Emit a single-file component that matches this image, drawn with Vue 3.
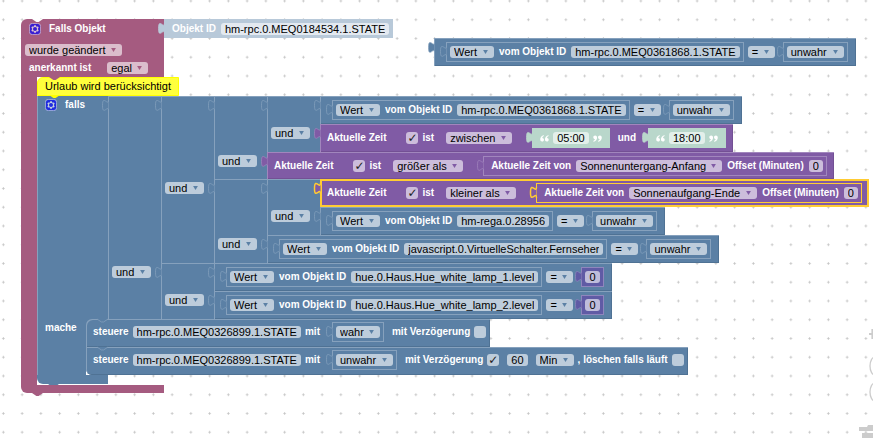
<script setup>
defineOptions({ name: 'BlockNode' })
defineProps({ node: { type: Object, default: null } })

const label = (text, gap) => ({ type: 'label', text, gap })
const field = (text, name, gap) => ({ type: 'field', text, name, gap })
const select = (text, name, gap) => ({ type: 'select', text, name, gap })
const check = (on, name, gap) => ({ type: 'check', on, name, gap })
const sub = (node, gap) => ({ type: 'block', node, gap })
const quote = (side) => ({ type: 'quote', side })

const inner = (color, items, extra = '') => ({ kind: 'row', cls: ['inner', color, extra], items })
const row = (color, items, extra = '') => ({ kind: 'row', cls: ['leaf', color, extra], items })
const and = (a, b) => ({ kind: 'and', a, b })

const bool = (text) => inner('blue', [select(text, 'Wahrheitswert')])
const num = (text) => inner('indigo', [field(text, 'Zahl')])
const clock = (text) => inner('green', [quote('open'), field(text, 'Uhrzeit'), quote('close')])
const compare = (id, right) =>
  row('blue', [
    sub(inner('blue', [select('Wert', 'Attribut'), label('vom Objekt ID'), field(id, 'Objekt ID')])),
    select('=', 'Vergleich'),
    sub(right, 'sm'),
  ], 'holds')
const time = (op, rest, extra) =>
  row('purple', [
    label('Aktuelle Zeit'),
    check(true, 'Aktuelle Zeit', 'lg'),
    label('ist'),
    select(op, 'Zeitvergleich', 'md'),
    ...rest,
  ], extra)
const astro = (name) =>
  sub(inner('purple', [
    label('Aktuelle Zeit von'),
    select(name, 'Astrozeit'),
    label('Offset (Minuten)'),
    field('0', 'Offset in Minuten'),
  ], 'wide'), 'lg')
const steer = (value, rest) => ({
  kind: 'row',
  cls: ['leaf', 'blue', 'statement'],
  items: [
    label('steuere'),
    field('hm-rpc.0.MEQ0326899.1.STATE', 'Objekt ID'),
    label('mit'),
    sub(bool(value), 'md'),
    label('mit Verzögerung', 'sm'),
    ...rest,
  ],
})

const trigger = inner('pale', [label('Objekt ID'), field('hm-rpc.0.MEQ0184534.1.STATE', 'Objekt ID')], 'wide')
const loose = compare('hm-rpc.0.MEQ0361868.1.STATE', bool('unwahr'))

const condition = and(
  and(
    and(
      and(
        compare('hm-rpc.0.MEQ0361868.1.STATE', bool('unwahr')),
        time('zwischen', [sub(clock('05:00'), 'lg'), label('und', 'sm'), sub(clock('18:00'), 'md')]),
      ),
      time('größer als', [astro('Sonnenuntergang-Anfang')], 'short'),
    ),
    and(
      and(
        time('kleiner als', [astro('Sonnenaufgang-Ende')], 'selected'),
        compare('hm-rega.0.28956', bool('unwahr')),
      ),
      compare('javascript.0.VirtuelleSchalter.Fernseher', bool('unwahr')),
    ),
  ),
  and(
    compare('hue.0.Haus.Hue_white_lamp_1.level', num('0')),
    compare('hue.0.Haus.Hue_white_lamp_2.level', num('0')),
  ),
)

const actions = [
  steer('wahr', [check(false, 'mit Verzögerung')]),
  steer('unwahr', [
    check(true, 'mit Verzögerung'),
    field('60', 'Verzögerung', 'sm'),
    select('Min', 'Einheit', 'sm'),
    label(', löschen falls läuft'),
    check(false, 'löschen falls läuft'),
  ]),
]

const gear =
  'm4.203,7.296 0,1.368 -0.92,0.677 -0.11,0.41 0.9,1.559 0.41,0.11 1.043,-0.457 1.187,0.683 0.127,1.134 0.3,0.3 1.8,0 0.3,-0.299 0.127,-1.138 1.185,-0.682 1.046,0.458 0.409,-0.11 0.9,-1.559 -0.11,-0.41 -0.92,-0.677 0,-1.366 0.92,-0.677 0.11,-0.41 -0.9,-1.559 -0.409,-0.109 -1.046,0.458 -1.185,-0.682 -0.127,-1.138 -0.3,-0.299 -1.8,0 -0.3,0.3 -0.126,1.135 -1.187,0.682 -1.043,-0.457 -0.41,0.11 -0.899,1.559 0.108,0.409z'
const tab = 'M8,5 c0,10 -8,-8 -8,7.5 s8,-2.5 8,7.5'
</script>

<template>
  <main v-if="!node" class="workspace">
    <svg class="grid-dots" aria-hidden="true">
      <defs>
        <pattern id="dots" width="25" height="25" patternUnits="userSpaceOnUse" patternTransform="translate(-6 -8.4) scale(.75)">
          <path d="M11 12.5h3M12.5 11v3" stroke="#c4c4c4" stroke-width="1.4" />
        </pattern>
      </defs>
      <rect width="100%" height="100%" fill="url(#dots)" />
    </svg>

    <section class="script">
      <div class="event-head pink">
        <svg class="notch" viewBox="0 0 15 4"><path fill="#fff" d="M0 0l6 4h3l6-4z" /></svg>
        <div class="event-title">
          <button class="gear" type="button" aria-label="Einstellungen">
            <svg viewBox="0 0 16 16"><rect class="gear-box" x=".5" y=".5" width="15" height="15" rx="4" /><path fill="#fff" :d="gear" /><circle class="gear-hub" cx="8" cy="8" r="2.7" /></svg>
          </button>
          <span class="label">Falls Objekt</span>
          <BlockNode class="trigger" :node="trigger" />
        </div>
        <div class="event-line">
          <span class="pick">
            <select aria-label="Ereignis"><option>wurde geändert</option></select>
            <svg class="arrow" viewBox="0 0 6 5"><path d="M0 0h6L3 5z" /></svg>
          </span>
        </div>
        <div class="event-line">
          <label class="label" for="ack">anerkannt ist</label>
          <span class="pick gap-lg">
            <select id="ack"><option>egal</option></select>
            <svg class="arrow" viewBox="0 0 6 5"><path d="M0 0h6L3 5z" /></svg>
          </span>
        </div>
      </div>

      <div class="event-body">
        <div class="rail pink"></div>
        <div class="stack">
          <div class="comment">
            <svg class="notch pink-notch" viewBox="0 0 15 4"><path d="M0 0l6 4h3l6-4z" /></svg>
            Urlaub wird berücksichtigt
            <svg class="notch yellow-notch" viewBox="0 0 15 4"><path d="M0 0l6 4h3l6-4z" /></svg>
          </div>
          <div class="branch">
            <div class="arm arm-if blue">
              <button class="gear" type="button" aria-label="Bedingung bearbeiten">
                <svg viewBox="0 0 16 16"><rect class="gear-box" x=".5" y=".5" width="15" height="15" rx="4" /><path fill="#fff" :d="gear" /><circle class="gear-hub" cx="8" cy="8" r="2.7" /></svg>
              </button>
              <span class="label">falls</span>
            </div>
            <BlockNode :node="condition" />
          </div>
          <div class="branch">
            <div class="arm arm-do blue"><span class="label">mache</span></div>
            <div class="actions">
              <BlockNode v-for="(a, i) in actions" :key="i" :node="a" />
            </div>
          </div>
          <div class="foot blue">
            <svg class="notch under" viewBox="0 0 15 4"><path d="M0 0l6 4h3l6-4z" /></svg>
          </div>
        </div>
      </div>
      <div class="event-foot pink">
        <svg class="notch under" viewBox="0 0 15 4"><path d="M0 0l6 4h3l6-4z" /></svg>
      </div>
    </section>

    <section class="loose"><BlockNode :node="loose" /></section>

    <svg class="controls" viewBox="0 0 14 112" aria-hidden="true">
      <g fill="none" stroke="#ccc" stroke-width="1.3">
        <path d="M10 8h4M13.4 3v10" stroke-width="2" />
        <ellipse cx="16" cy="40" rx="5" ry="9" />
        <ellipse cx="16" cy="66" rx="5" ry="9" />
      </g>
      <path fill="#ccc" d="M0 101h8l1-2h5v6H0zM3 107h11v5H3z" />
    </svg>
  </main>

  <div v-else-if="node.kind === 'and'" class="and">
    <div class="and-top blue">
      <svg class="tab" viewBox="0 0 8 20"><path :d="tab" /></svg>
    </div>
    <BlockNode :node="node.a" />
    <div class="and-bottom blue">
      <span class="pick">
        <select aria-label="Verknüpfung"><option>und</option></select>
        <svg class="arrow" viewBox="0 0 6 5"><path d="M0 0h6L3 5z" /></svg>
      </span>
    </div>
    <BlockNode :node="node.b" />
  </div>

  <div v-else class="row" :class="node.cls">
    <svg v-if="node.cls.includes('statement')" class="notch" viewBox="0 0 15 4"><path d="M0 0l6 4h3l6-4" /></svg>
    <svg v-else class="tab" viewBox="0 0 8 20"><path :d="tab" /></svg>
    <template v-for="(item, i) in node.items" :key="i">
      <span v-if="item.type === 'label'" class="label" :class="item.gap && 'gap-' + item.gap">{{ item.text }}</span>
      <input v-else-if="item.type === 'field'" class="field" :class="item.gap && 'gap-' + item.gap" type="text" :value="item.text" :aria-label="item.name" />
      <span v-else-if="item.type === 'select'" class="pick" :class="item.gap && 'gap-' + item.gap">
        <select :aria-label="item.name"><option>{{ item.text }}</option></select>
        <svg class="arrow" viewBox="0 0 6 5"><path d="M0 0h6L3 5z" /></svg>
      </span>
      <input v-else-if="item.type === 'check'" class="check" :class="item.gap && 'gap-' + item.gap" type="checkbox" :checked="item.on" :aria-label="item.name" />
      <svg v-else-if="item.type === 'quote'" class="quote" :class="item.side" viewBox="0 2 12 9">
        <path d="M5 2.200C2 3 .3 5 .3 7.600c0 1.900 1 3 2.500 3s2.500-1 2.500-2.500S4.400 5.800 3.100 5.700C3.200 4.600 3.900 3.800 5.400 3.200zM11.300 2.200C8.300 3 6.600 5 6.600 7.600c0 1.900 1 3 2.500 3s2.500-1 2.500-2.500-.9-2.300-2.200-2.400c.1-1.100.8-1.900 2.300-2.500z" />
      </svg>
      <BlockNode v-else :class="item.gap && 'gap-' + item.gap" :node="item.node" />
    </template>
  </div>
</template>

<style>
body {
  margin: 0;
  background: #fff;
}
</style>

<style scoped>
.workspace {
  position: relative;
  min-height: 100vh;
  overflow: hidden;
  font: 11px/12px "Liberation Sans", Arial, sans-serif;
  color: #000;
}
.grid-dots {
  position: absolute;
  inset: 0;
  width: 100%;
  height: 100%;
}
.script {
  position: absolute;
  left: 21px;
  top: 19px;
}
.loose {
  position: absolute;
  left: 434px;
  top: 38px;
}
.controls {
  position: absolute;
  right: 0;
  bottom: 0;
  width: 14px;
  height: 112px;
}

.blue { --c: #5b80a5; --hi: #86a1bd; --shade: #4f7294; background: var(--c); }
.purple { --c: #805ba5; --hi: #a186bd; --shade: #735094; background: var(--c); }
.pink { --c: #a55b80; --hi: #bd86a1; background: var(--c); }
.indigo { --c: #605ba5; --hi: #8f86bd; background: var(--c); }
.pale { --c: #b8c9d9; --hi: #b8c9d9; background: var(--c); }
.green { --c: #b9d7cb; --hi: #b9d7cb; background: var(--c); }

.label {
  color: #fff;
  font-size: 10px;
  font-weight: 700;
  white-space: nowrap;
}
.field,
.pick select {
  box-sizing: border-box;
  height: 12px;
  margin: 0;
  border: 0;
  border-radius: 3px;
  outline: 0;
  background: rgba(255, 255, 255, 0.6);
  color: #000;
  font: inherit;
  line-height: 12px;
}
.field {
  field-sizing: content;
  padding: 0 4px;
}
.pick {
  display: inline-grid;
  align-items: center;
}
.pick select {
  grid-area: 1 / 1;
  appearance: none;
  padding: 0 16px 0 4px;
}
.arrow {
  grid-area: 1 / 1;
  justify-self: end;
  width: 5px;
  height: 4px;
  margin-right: 6px;
  fill: var(--c);
  pointer-events: none;
}
.check {
  appearance: none;
  display: grid;
  place-items: center;
  width: 12px;
  height: 12px;
  margin: 0;
  border-radius: 3px;
  background: rgba(255, 255, 255, 0.6);
}
.check:checked::before {
  content: "✓";
  font: 12px/12px "DejaVu Sans", sans-serif;
  color: #222;
}
.quote {
  width: 9px;
  height: 7px;
  fill: #fff;
}
.quote.close {
  transform: rotate(180deg);
}
.gear {
  display: block;
  width: 12px;
  height: 12px;
  padding: 0;
  border: 0;
  background: none;
  opacity: 0.65;
}
.gear svg {
  display: block;
}
.gear-box {
  fill: #00f;
  stroke: #fff;
}
.gear-hub {
  fill: #00f;
}

.row {
  position: relative;
  box-sizing: border-box;
  display: flex;
  align-items: center;
  justify-self: start;
  gap: 4px;
  width: max-content;
  padding: 0 8px;
  box-shadow: inset 1px 1px 0 var(--hi), inset -1px -1px 0 var(--shade);
}
.leaf {
  height: 28px;
}
.leaf.short {
  height: 27px;
}
.leaf.purple {
  padding: 0 7px;
}
.leaf.holds {
  padding-left: 12px;
}
.leaf.statement {
  padding: 0 4px 2px 7px;
  border-top-left-radius: 6px;
}
.inner {
  gap: 5px;
  height: 20px;
  padding: 0 4px;
  box-shadow: inset 0 0 0 1px var(--hi);
}
.inner.wide {
  padding-left: 8px;
}
.inner.green {
  gap: 4px;
  padding: 0 8px;
}
.selected,
.selected .inner {
  --line: #fc3;
}
.selected {
  z-index: 1;
  box-shadow: inset 0 0 0 2px #fc3;
}
.selected .inner {
  box-shadow: inset 0 0 0 1px #fc3;
}
.tab {
  position: absolute;
  left: -6px;
  top: 0;
  width: 7px;
  height: 15px;
  overflow: visible;
  fill: var(--c);
  stroke: var(--line, var(--hi));
  pointer-events: none;
}
.selected .tab {
  stroke-width: 2;
}
.notch {
  position: absolute;
  left: 11px;
  top: 0;
  width: 11px;
  height: 3px;
  overflow: visible;
  fill: var(--c);
}
.notch.under {
  top: 100%;
}
.statement > .notch {
  stroke: var(--hi);
}
.gap-sm { margin-left: 4px; }
.gap-md { margin-left: 8px; }
.gap-lg { margin-left: 16px; }

.and {
  display: grid;
  grid-template-columns: 53px max-content;
}
.and-top,
.and-bottom {
  position: relative;
  box-shadow: inset 1px 0 0 var(--hi);
}
.and-top {
  box-shadow: inset 1px 1px 0 var(--hi);
}
.and-bottom {
  padding: 3px 4px;
}

.event-head {
  position: relative;
  display: flex;
  flex-direction: column;
  gap: 6px;
  width: 143px;
  height: 58px;
  border-top-left-radius: 6px;
}
.event-title {
  display: flex;
  align-items: center;
  gap: 8px;
  height: 19px;
  padding-left: 8px;
}
.trigger {
  position: absolute;
  left: 100%;
  height: 19px;
}
.event-line {
  display: flex;
  align-items: center;
  height: 12px;
  padding-left: 4px;
}
.event-line .label {
  padding-left: 4px;
}
.event-body {
  display: flex;
}
.rail {
  width: 16px;
}
.stack {
  display: flex;
  flex-direction: column;
  align-items: flex-start;
  padding-bottom: 1px;
}
.comment {
  position: relative;
  z-index: 2;
  box-sizing: border-box;
  height: 19px;
  padding: 2px 7px;
  border: 1px solid #ff0;
  border-top-left-radius: 6px;
  background: #ffff3c;
  line-height: 13px;
}
.pink-notch { fill: #a55b80; top: -1px; }
.yellow-notch { fill: #ff0; top: 100%; }
.branch {
  display: flex;
}
.arm {
  display: flex;
  box-sizing: border-box;
  align-items: flex-start;
  box-shadow: inset 1px 0 0 var(--hi);
  padding: 3px 8px;
}
.arm-if {
  width: 71px;
  gap: 8px;
}
.arm-do {
  width: 49px;
}
.actions {
  display: flex;
  flex-direction: column;
  background: linear-gradient(#5b80a5, #5b80a5) 0 0 / 8px 8px no-repeat;
}
.actions > .statement:last-child {
  border-radius: 0 0 0 6px;
}
.foot {
  position: relative;
  width: 71px;
  height: 9px;
  border-bottom-left-radius: 6px;
}
.event-foot {
  position: relative;
  width: 143px;
  height: 8px;
  border-bottom-left-radius: 6px;
}
</style>
